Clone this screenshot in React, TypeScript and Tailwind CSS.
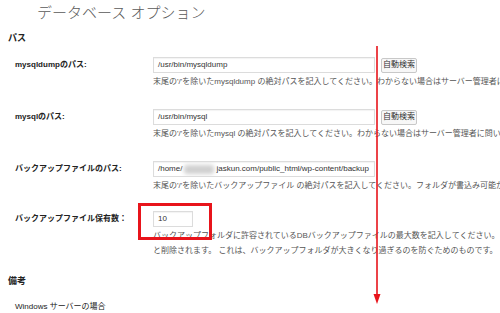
import type { ReactNode } from "react";

const font = "font-['Liberation_Sans','Noto_Sans_CJK_JP',sans-serif]";

function Row({
  label,
  className,
  children,
}: {
  label: string;
  className?: string;
  children: ReactNode;
}) {
  return (
    <div className={`flex ${className ?? ""}`}>
      <div className="flex h-[16px] w-[145px] shrink-0 items-center pl-[7px] text-[8px] font-bold text-[#222]">
        {label}
      </div>
      <div className="min-w-0 flex-1">{children}</div>
    </div>
  );
}

function Field({ children, width = "w-[222px]", search = false }: { children: ReactNode; width?: string; search?: boolean }) {
  return (
    <div className="flex items-center gap-[6px]">
      <div
        className={`flex h-[16px] ${width} items-center overflow-hidden whitespace-nowrap border border-[#dcdcdc] bg-white pl-[4px] text-[8px] text-[#333] shadow-[inset_0_1px_1px_rgba(0,0,0,0.05)]`}
      >
        {children}
      </div>
      {search && (
        <button className="flex h-[15px] w-[36px] items-center justify-center rounded-[2px] border border-[#c8c8c8] bg-[#f7f7f7] text-[8px] text-[#333]">
          自動検索
        </button>
      )}
    </div>
  );
}

function Desc({ children }: { children: ReactNode }) {
  return <p className="mt-[1px] whitespace-nowrap text-[8px] leading-[15px] text-[#555]">{children}</p>;
}

export default function App() {
  return (
    <div className={`relative h-[313px] w-[500px] overflow-hidden bg-white ${font}`}>
      <div className="flex flex-col pl-[8px]">
        <h1 className="h-[26px] pl-[29px] text-[15px] font-light leading-[26px] text-[#5a5a5a]">データベース オプション</h1>
        <h2 className="mt-[5px] h-[14px] text-[9px] font-bold leading-[14px] text-[#222]">パス</h2>

        <Row label="mysqldumpのパス:" className="mt-[12px]">
          <Field search>/usr/bin/mysqldump</Field>
          <Desc>末尾の'/'を除いたmysqldump の絶対パスを記入してください。わからない場合はサーバー管理者に問い合わせてください。</Desc>
        </Row>

        <Row label="mysqlのパス:" className="mt-[20px]">
          <Field search>/usr/bin/mysql</Field>
          <Desc>末尾の'/'を除いたmysql の絶対パスを記入してください。わからない場合はサーバー管理者に問い合わせてください。</Desc>
        </Row>

        <Row label="バックアップファイルのパス:" className="mt-[20px]">
          <Field>
            /home/
            <span className="mx-[2px] inline-block h-[9px] w-[30px] rounded-[3px] bg-[#cfcfcf] blur-[2px]" />
            jaskun.com/public_html/wp-content/backup
          </Field>
          <Desc>末尾の'/'を除いたバックアップファイル の絶対パスを記入してください。フォルダが書込み可能かどうか確認してください。</Desc>
        </Row>

        <Row label="バックアップファイル保有数：" className="mt-[18px]">
          <Field width="w-[40px]">10</Field>
          <Desc>
            バックアップフォルダに許容されているDBバックアップファイルの最大数を記入してください。 この数を超えると古いものから順に
            <br />
            と削除されます。 これは、バックアップフォルダが大きくなり過ぎるのを防ぐためのものです。
          </Desc>
        </Row>

        <h2 className="mt-[16px] h-[14px] text-[9px] font-bold leading-[14px] text-[#222]">備考</h2>
        <div className="mt-[12px] h-[14px] pl-[7px] text-[8px] leading-[14px] text-[#222]">Windows サーバーの場合</div>
      </div>

      {/* annotation: red frame around the count field */}
      <div className="absolute left-[138px] top-[203px] h-[37px] w-[74px] border-[3px] border-[#e8141b]" />

      {/* annotation: red downward arrow */}
      <svg className="absolute left-[372px] top-[46px]" width="10" height="260" viewBox="0 0 10 260">
        <line x1="5" y1="0" x2="5" y2="250" stroke="#e8141b" strokeWidth="1.6" />
        <polygon points="1.5,248 8.5,248 5,258" fill="#e8141b" />
      </svg>
    </div>
  );
}
